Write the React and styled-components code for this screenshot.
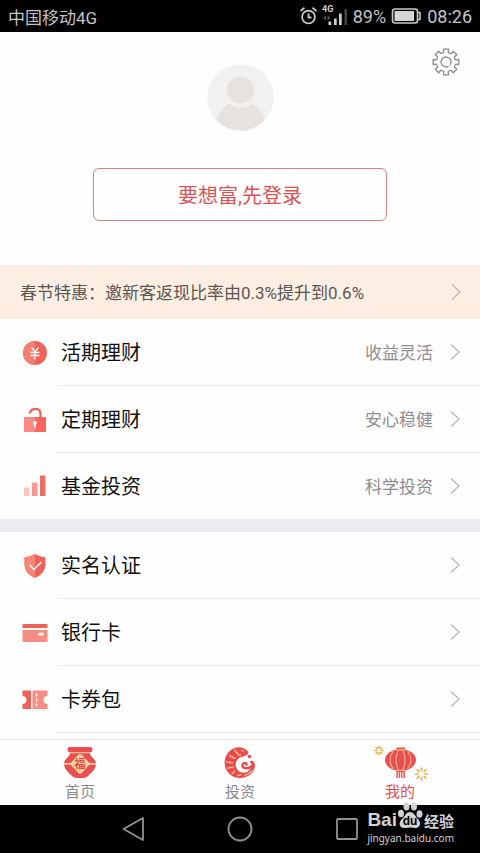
import React from "react";
import styled, { createGlobalStyle, css } from "styled-components";

const GlobalStyle = createGlobalStyle`
  * { box-sizing: border-box; }
  body {
    margin: 0;
    background: #fefefe;
    font-family: Roboto, "Noto Sans CJK SC", sans-serif;
    color: #111;
  }
  button { font: inherit; border: 0; background: none; padding: 0; cursor: pointer; }
  a { color: inherit; text-decoration: none; }
  ul { list-style: none; margin: 0; padding: 0; }
  svg { display: block; flex: none; }
`;

const Screen = styled.div`
  min-height: 100vh;
  display: flex;
  flex-direction: column;
`;

const StatusBar = styled.header`
  height: 32px;
  padding: 0 8px;
  display: flex;
  align-items: center;
  justify-content: space-between;
  background: #000;
  color: #c4c4c4;
  font-size: 17px;
`;

const StatusGroup = styled.div`
  display: flex;
  align-items: center;
  gap: 5px;
  font-size: 18px;
`;

const Main = styled.main`
  flex: 1;
`;

const Profile = styled.section`
  padding: 16px 20px 44px;
  display: grid;
  grid-template-columns: 1fr auto 1fr;
  row-gap: 37px;
`;

const Avatar = styled.div`
  grid-column: 2;
  margin-top: 16px;
`;

const SettingsButton = styled.button`
  grid-column: 3;
  justify-self: end;
  align-self: start;
`;

const LoginButton = styled.button`
  && {
    grid-column: 1 / -1;
    height: 53px;
    margin: 0 73px;
    border: 1px solid #d98080;
    border-radius: 6px;
    color: #dc5356;
    font-size: 20px;
  }
`;

const Promo = styled.a`
  height: 54px;
  padding: 0 19px 0 20px;
  display: flex;
  align-items: center;
  justify-content: space-between;
  background: #fdeee4;
  color: #5c5650;
  font-size: 17px;
`;

const PromoText = styled.span`
  padding-bottom: 2px;
`;

const Menu = styled.ul`
  & + & {
    border-top: 13px solid #ebecf1;
  }
`;

const MenuLink = styled.a`
  display: flex;
  align-items: stretch;
`;

const MenuIcon = styled.span`
  width: 57px;
  padding-left: 21px;
  display: flex;
  align-items: center;
`;

const MenuBody = styled.span`
  flex: 1;
  height: ${(p) => (p.$divided ? 67 : 66)}px;
  padding: 0 20px 0 4px;
  display: flex;
  align-items: center;
  gap: 17px;
  ${(p) => p.$divided && css`border-bottom: 1px solid #e9e9eb;`}
`;

const MenuTitle = styled.span`
  flex: 1;
  padding-bottom: 2px;
  font-size: 20px;
`;

const MenuDetail = styled.span`
  padding-bottom: 2px;
  font-size: 17px;
  color: #8f8d90;
`;

const TabBar = styled.nav`
  height: 66px;
  padding-top: 6px;
  border-top: 1px solid #e4e4e6;
  display: grid;
  grid-template-columns: repeat(3, 1fr);
`;

const Tab = styled.a`
  display: flex;
  flex-direction: column;
  align-items: center;
  gap: 3px;
  font-size: 15px;
  line-height: 20px;
  color: ${(p) => (p.$active ? "#dc5356" : "#8b898c")};
`;

const SystemNav = styled.footer`
  position: relative;
  height: 48px;
  padding: 0 80px;
  display: grid;
  grid-template-columns: repeat(3, 1fr);
  background: #000;
`;

const SystemButton = styled.button`
  display: grid;
  place-items: center;
`;

const Watermark = styled.div`
  position: absolute;
  right: 26px;
  bottom: 9px;
  color: #d2d2d2;
`;

const WatermarkLogo = styled.div`
  display: flex;
  align-items: flex-end;
  justify-content: space-between;
  height: 28px;
  font: 700 19px/20px "Liberation Sans", sans-serif;
`;

const WatermarkWord = styled.span`
  font: 700 15px/19px "Noto Sans CJK SC", sans-serif;
`;

const WatermarkSite = styled.div`
  margin-top: 2px;
  font: 10px/12px "Noto Sans", sans-serif;
`;

const RED = "#ee6259";
const CORAL = "#f98c82";

const Chevron = () => (
  <svg width="10" height="18" viewBox="0 0 10 18" fill="none" stroke="#b9b7b8" strokeWidth="1.4">
    <path d="M1 1.5 9 9 1 16.5" />
  </svg>
);

const AlarmIcon = () => (
  <svg width="18" height="20" viewBox="0 0 18 20" fill="none" stroke="#c8c8c8" strokeWidth="1.8">
    <circle cx="9.500" cy="11" r="6.400" />
    <path d="M9.500 7.500V11.500H12.500M1.500 5 5.500 1.800M17.500 5 13.500 1.800" />
  </svg>
);

const SignalIcon = () => (
  <svg width="26" height="24" viewBox="0 0 26 24" fill="#d0d0d0">
    <text x="0" y="8" fontSize="9" fontWeight="700" fontFamily="Roboto">4G</text>
    <path d="M1 14 4 11.500V16.500ZM8.500 14 5.500 11.500V16.500Z" fill="#555" />
    <path d="M6.500 17.500h2.700V21H6.500ZM12 14.500h2.700V21H12ZM17 9.500h2.700V21H17Z" />
    <path d="M22.500 5h2.500V21H22.500Z" fill="#444" />
  </svg>
);

const BatteryIcon = () => (
  <svg width="31" height="16" viewBox="0 0 31 16">
    <rect x="1.500" y="1" width="25" height="14" rx="2.500" fill="none" stroke="#c8c8c8" strokeWidth="1.600" />
    <rect x="3.500" y="3" width="19.500" height="10" fill="#d4d4d4" />
    <path d="M27 4.500h2v7H27" fill="none" stroke="#c8c8c8" strokeWidth="1.600" />
  </svg>
);

const gearPath = () => {
  const points = [];
  for (let i = 0; i < 8; i += 1) {
    [[-13, 10], [-11, 13], [11, 13], [13, 10]].forEach(([deg, r]) => {
      const a = ((i * 45 + deg) * Math.PI) / 180;
      points.push(`${(14 + r * Math.sin(a)).toFixed(1)} ${(14 - r * Math.cos(a)).toFixed(1)}`);
    });
  }
  return points
    .map((p, i) => (i === 0 ? `M${p}` : i % 4 === 0 ? `A3.2 3.2 0 0 0 ${p}` : `L${p}`))
    .join("") + "Z";
};

const GearIcon = () => (
  <svg width="28" height="28" viewBox="0 0 28 28" fill="none" stroke="#8c8c8e" strokeWidth="1.3" strokeLinejoin="round">
    <path d={gearPath()} />
    <path d="M18.500 16.300A5 5 0 1 0 16 18.600" strokeLinecap="round" />
  </svg>
);

const AvatarIcon = () => (
  <svg width="67" height="67" viewBox="0 0 67 67">
    <circle cx="33.500" cy="33.500" r="33.300" fill="#f3f1f0" />
    <circle cx="33.500" cy="26" r="13.600" fill="#e6e2e0" />
    <path d="M22 39.500Q33.500 48 46 39.500Q55 46 57.500 56.500A33.300 33.300 0 0 1 9.500 56.500Q12.500 45.500 22 39.500Z" fill="#e6e2e0" />
  </svg>
);

const YuanIcon = () => (
  <svg width="27" height="26" viewBox="0 0 27 26">
    <circle cx="14" cy="13" r="12" fill={RED} />
    <path d="M14 1a12 12 0 0 0 0 24Z" fill="#f67f73" />
    <path d="M10.500 7.500 14 11.500 17.500 7.500M14 11.500v8M9.500 12.500h9M9.500 15.500h9" fill="none" stroke="#fff" strokeWidth="1.300" />
  </svg>
);

const LockIcon = () => (
  <svg width="27" height="26" viewBox="0 0 27 26">
    <path d="M8.500 6.500C9.500 3 12 1.800 14.500 1.800C18 1.800 19.500 4.300 19.500 7V11" fill="none" stroke={RED} strokeWidth="2.200" />
    <rect x="3" y="10" width="22" height="15" rx="1" fill="#fa655c" />
    <path d="M4 10H14V25H4a1 1 0 0 1-1-1V11a1 1 0 0 1 1-1Z" fill={CORAL} />
    <circle cx="14" cy="16" r="1.900" fill="#fff" />
    <path d="M13.200 16h1.600v5h-1.600Z" fill="#fff" />
  </svg>
);

const BarsIcon = () => (
  <svg width="27" height="26" viewBox="0 0 27 26">
    <rect x="3" y="14.500" width="5.500" height="8.500" rx="0.500" fill="#fbc3bb" />
    <rect x="11" y="9.500" width="5.500" height="13.500" rx="0.500" fill="#f59a90" />
    <rect x="19" y="2.500" width="5.500" height="20.500" rx="0.500" fill="#ec6f66" />
  </svg>
);

const ShieldIcon = () => (
  <svg width="27" height="26" viewBox="0 0 27 26">
    <path d="M14 1Q18.500 4 24.500 4.500V12Q24 20.500 14 25Q4 20.500 3.500 12V4.500Q9.500 4 14 1Z" fill={RED} />
    <path d="M14 1V25Q4 20.500 3.500 12V4.500Q9.500 4 14 1Z" fill="#fa8478" />
    <path d="M8.500 12 13 16.500 20.500 9" fill="none" stroke="#fff" strokeWidth="1.500" />
  </svg>
);

const CardIcon = () => (
  <svg width="27" height="26" viewBox="0 0 27 26">
    <path d="M2.500 4H25.500a1 1 0 0 1 1 1V8H1.500V5a1 1 0 0 1 1-1Z" fill={RED} />
    <path d="M1.500 10H26.500V21a1 1 0 0 1-1 1H2.500a1 1 0 0 1-1-1Z" fill={CORAL} />
    <rect x="17.500" y="12.800" width="5" height="2.700" rx="0.500" fill="#fff" />
  </svg>
);

const TicketIcon = () => (
  <svg width="27" height="26" viewBox="0 0 27 26">
    <path d="M1.500 3.500H10V22H1.500V17A4 4 0 0 0 1.500 9Z" fill={RED} />
    <path d="M11.500 3.500H26.500V9A4 4 0 0 0 26.500 17V22H11.500Z" fill={CORAL} />
    <path d="M15.500 6.500V19.500" stroke="#fff" strokeWidth="1.500" strokeDasharray="3 2" />
  </svg>
);

const PotIcon = () => (
  <svg width="32" height="33" viewBox="0 0 32 33">
    <rect x="3.500" y="1" width="25" height="5.500" rx="2.400" fill="#ea4f50" />
    <path d="M6 7H26C26 11 32 12.500 32 18C32 23 27 27 24 30Q22 32 19 32H13Q10 32 8 30C5 27 0 23 0 18C0 12.500 6 11 6 7Z" fill="#ea4f50" />
    <path d="M6.500 6.800H25.500" stroke="#fbc99a" strokeWidth="1" />
    <path d="M0 17H6.500L14 9Q16 7.500 18 9L25.500 17H32V18.800H25.500L18 26.800Q16 28.500 14 26.800L6.500 18.800H0Z" fill="#fbcf9f" />
    <text x="16" y="22" textAnchor="middle" fontSize="11" fontWeight="700" fill="#df4d44" fontFamily="Noto Sans CJK SC">福</text>
  </svg>
);

const FishIcon = () => (
  <svg width="32" height="33" viewBox="0 0 32 33">
    <path d="M24.500 6C21 2 17 1 14 1.200C6 2 .5 9 .6 17C1 26 8 32 16 32C24 32 30.500 27 31 19.500C31.200 16 28.500 13.500 25.500 15.200C27.500 17 28 20 26.500 22.500C24 27 18.500 28 14.500 25C10.500 21.500 11 15.500 14.500 12.500C18 9.500 24 11 24.500 6Z" fill="#ea4a4b" />
    <path d="M27 20.500C23.500 23.500 18 22.500 18.500 19C19 16.500 22.500 16.300 22.500 18.500" fill="none" stroke="#ea4a4b" strokeWidth="2.400" strokeLinecap="round" />
    <circle cx="25.500" cy="10.500" r="1.700" fill="#ea4a4b" />
    <circle cx="18.500" cy="4.800" r="1" fill="#fbd0a0" />
    <g fill="none" stroke="#fbbf94" strokeWidth="1.300" strokeLinecap="round">
      <path d="M11 4Q11 6.500 13.500 7Q14 9.500 16.500 9" />
      <path d="M5.500 9Q6.500 11.500 8.500 10.500Q9.500 13 11.500 12" />
      <path d="M2.500 15.500Q4.500 17.500 6 15.800Q7.500 18 9 16.500" />
      <path d="M3.500 22Q5.500 22.500 6.500 21Q8 22.500 9.500 21" />
      <path d="M8 27.500Q10 27 10.500 25M13.500 29.500Q16 29.500 17 28.500M21 29.500Q25 28 28 24.500" />
    </g>
  </svg>
);

const Spark = ({ x, y, inner, outer }) => (
  <g stroke="#e9b23c" strokeWidth="1.700" strokeLinecap="round">
    {[0, 45, 90, 135, 180, 225, 270, 315].map((deg) => (
      <path key={deg} d={`M${x} ${y - inner}V${y - outer}`} transform={`rotate(${deg} ${x} ${y})`} />
    ))}
  </g>
);

const LanternIcon = () => (
  <svg width="58" height="33" viewBox="0 0 58 33" overflow="visible">
    <Spark x={8} y={4.500} inner={2.600} outer={4} />
    <Spark x={50.500} y={28} inner={3.500} outer={6} />
    <path d="M25.500 1.500H34V4H25.500ZM25.500 24H34V26H25.500Z" fill="#ea4f50" />
    <ellipse cx="29.500" cy="14" rx="15.500" ry="10.800" fill="#ea4f50" />
    <g fill="none" stroke="#fba98c" strokeWidth="1.200">
      <path d="M22.500 5Q15.500 14 22.500 23M27 4.500Q23 14 27 23.500M32 4.500Q36 14 32 23.500M36.500 5Q43.500 14 36.500 23" />
    </g>
    <path d="M25.500 3.800H34M25.500 24.300H34" stroke="#fbc082" strokeWidth="1.200" />
    <path d="M26 26V32M28.400 26V32M30.800 26V32M33.200 26V32" stroke="#e65b59" strokeWidth="1.500" />
  </svg>
);

const PawIcon = () => (
  <svg width="26" height="29" viewBox="0 0 26 29" fill="#d2d2d2">
    <ellipse cx="4" cy="12.500" rx="3" ry="3.800" />
    <ellipse cx="9.500" cy="5.500" rx="3" ry="4" />
    <ellipse cx="17" cy="5.500" rx="3" ry="4" />
    <ellipse cx="22.500" cy="13" rx="3" ry="3.800" />
    <path d="M13 11C17 11 18 15 21 18C24.500 21.500 23.500 27 18.500 27Q13 26 8 27C2.500 27.500 1 22 4.500 18.500C8 15.500 9 11 13 11Z" />
    <text x="13" y="24" textAnchor="middle" fontSize="12" fontWeight="700" fill="#000" fontFamily="Liberation Sans">du</text>
  </svg>
);

const savings = [
  { title: "活期理财", detail: "收益灵活", Icon: YuanIcon },
  { title: "定期理财", detail: "安心稳健", Icon: LockIcon },
  { title: "基金投资", detail: "科学投资", Icon: BarsIcon, last: true },
];

const account = [
  { title: "实名认证", Icon: ShieldIcon },
  { title: "银行卡", Icon: CardIcon },
  { title: "卡券包", Icon: TicketIcon },
];

const tabs = [
  { label: "首页", Icon: PotIcon },
  { label: "投资", Icon: FishIcon },
  { label: "我的", Icon: LanternIcon, active: true },
];

const MenuList = ({ items }) => (
  <Menu>
    {items.map(({ title, detail, Icon, last }) => (
      <li key={title}>
        <MenuLink href="#">
          <MenuIcon><Icon /></MenuIcon>
          <MenuBody $divided={!last}>
            <MenuTitle>{title}</MenuTitle>
            {detail && <MenuDetail>{detail}</MenuDetail>}
            <Chevron />
          </MenuBody>
        </MenuLink>
      </li>
    ))}
  </Menu>
);

export default function App() {
  return (
    <Screen>
      <GlobalStyle />
      <StatusBar>
        <span>中国移动4G</span>
        <StatusGroup>
          <AlarmIcon />
          <SignalIcon />
          <span>89%</span>
          <BatteryIcon />
          <span>08:26</span>
        </StatusGroup>
      </StatusBar>
      <Main>
        <Profile>
          <Avatar><AvatarIcon /></Avatar>
          <SettingsButton aria-label="设置"><GearIcon /></SettingsButton>
          <LoginButton>要想富,先登录</LoginButton>
        </Profile>
        <Promo href="#">
          <PromoText>春节特惠：邀新客返现比率由0.3%提升到0.6%</PromoText>
          <Chevron />
        </Promo>
        <MenuList items={savings} />
        <MenuList items={account} />
      </Main>
      <TabBar>
        {tabs.map(({ label, Icon, active }) => (
          <Tab key={label} href="#" $active={active} aria-current={active ? "page" : undefined}>
            <Icon />
            {label}
          </Tab>
        ))}
      </TabBar>
      <SystemNav>
        <SystemButton aria-label="返回">
          <svg width="24" height="26" viewBox="0 0 24 26" fill="none" stroke="#929292" strokeWidth="1.800" strokeLinejoin="round">
            <path d="M22 2V24L2.500 13Z" />
          </svg>
        </SystemButton>
        <SystemButton aria-label="主页">
          <svg width="26" height="26" viewBox="0 0 26 26" fill="none" stroke="#929292" strokeWidth="1.800">
            <circle cx="13" cy="13" r="11.500" />
          </svg>
        </SystemButton>
        <SystemButton aria-label="最近任务">
          <svg width="24" height="24" viewBox="0 0 24 24" fill="none" stroke="#929292" strokeWidth="1.800">
            <rect x="2" y="2" width="20" height="20" rx="1" />
          </svg>
        </SystemButton>
        <Watermark>
          <WatermarkLogo>
            <span>Bai</span>
            <PawIcon />
            <WatermarkWord>经验</WatermarkWord>
          </WatermarkLogo>
          <WatermarkSite>jingyan.baidu.com</WatermarkSite>
        </Watermark>
      </SystemNav>
    </Screen>
  );
}
